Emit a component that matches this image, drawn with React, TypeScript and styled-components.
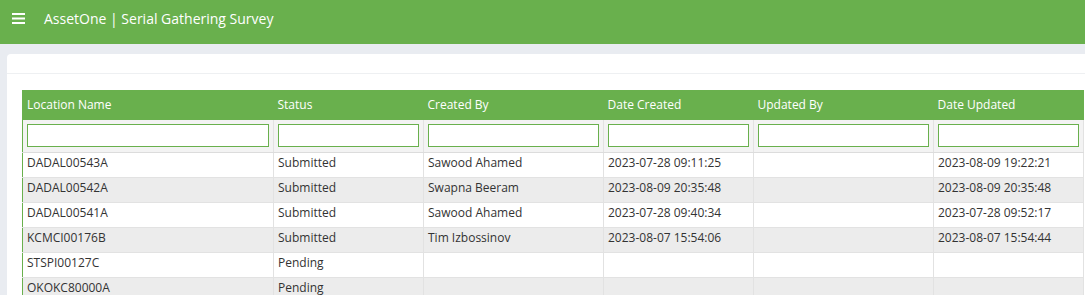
import * as React from "react";
import styled, { createGlobalStyle } from "styled-components";

const GlobalStyle = createGlobalStyle`
  html, body {
    margin: 0;
    padding: 0;
    background: #e9ecf1;
    font-family: "Open Sans", "Liberation Sans", sans-serif;
    overflow: hidden;
  }
`;

type Row = {
  location: string;
  status: string;
  createdBy: string;
  dateCreated: string;
  updatedBy: string;
  dateUpdated: string;
};

const rows: Row[] = [
  { location: "DADAL00543A", status: "Submitted", createdBy: "Sawood Ahamed", dateCreated: "2023-07-28 09:11:25", updatedBy: "", dateUpdated: "2023-08-09 19:22:21" },
  { location: "DADAL00542A", status: "Submitted", createdBy: "Swapna Beeram", dateCreated: "2023-08-09 20:35:48", updatedBy: "", dateUpdated: "2023-08-09 20:35:48" },
  { location: "DADAL00541A", status: "Submitted", createdBy: "Sawood Ahamed", dateCreated: "2023-07-28 09:40:34", updatedBy: "", dateUpdated: "2023-07-28 09:52:17" },
  { location: "KCMCI00176B", status: "Submitted", createdBy: "Tim Izbossinov", dateCreated: "2023-08-07 15:54:06", updatedBy: "", dateUpdated: "2023-08-07 15:54:44" },
  { location: "STSPI00127C", status: "Pending", createdBy: "", dateCreated: "", updatedBy: "", dateUpdated: "" },
  { location: "OKOKC80000A", status: "Pending", createdBy: "", dateCreated: "", updatedBy: "", dateUpdated: "" },
];

const columns = [
  { title: "Location Name", width: 251 },
  { title: "Status", width: 150 },
  { title: "Created By", width: 180 },
  { title: "Date Created", width: 150 },
  { title: "Updated By", width: 180 },
  { title: "Date Updated", width: 150 },
];

const MenuIcon = () => (
  <svg width="13" height="11" viewBox="0 0 13 11">
    <rect x="0" y="0" width="13" height="2" fill="#fff" />
    <rect x="0" y="4.5" width="13" height="2" fill="#fff" />
    <rect x="0" y="9" width="13" height="2" fill="#fff" />
  </svg>
);

export default function App() {
  return (
    <>
      <GlobalStyle />
      <TopBar>
        <MenuButton>
          <MenuIcon />
        </MenuButton>
        <Title>AssetOne | Serial Gathering Survey</Title>
      </TopBar>
      <Content>
        <Card>
          <CardHead />
          <CardBody>
            <Table>
              <colgroup>
                {columns.map((c) => (
                  <col key={c.title} style={{ width: c.width }} />
                ))}
              </colgroup>
              <thead>
                <tr>
                  {columns.map((c) => (
                    <HeadCell key={c.title}>{c.title}</HeadCell>
                  ))}
                </tr>
                <FilterRow>
                  {columns.map((c) => (
                    <FilterCell key={c.title}>
                      <FilterInput type="text" />
                    </FilterCell>
                  ))}
                </FilterRow>
              </thead>
              <tbody>
                {rows.map((r, i) => (
                  <BodyRow key={r.location} $odd={i % 2 === 1}>
                    <Cell>{r.location}</Cell>
                    <Cell>{r.status}</Cell>
                    <Cell>{r.createdBy}</Cell>
                    <Cell>{r.dateCreated}</Cell>
                    <Cell>{r.updatedBy}</Cell>
                    <Cell>{r.dateUpdated}</Cell>
                  </BodyRow>
                ))}
              </tbody>
            </Table>
          </CardBody>
        </Card>
      </Content>
    </>
  );
}

const TopBar = styled.header`
  height: 44px;
  background: #69b04d;
  display: flex;
  align-items: center;
  padding: 0 0 8px 12px;
  box-sizing: border-box;
`;

const MenuButton = styled.div`
  display: flex;
  align-items: center;
  width: 32px;
`;

const Title = styled.div`
  color: #fff;
  font-size: 14px;
`;

const Content = styled.main`
  padding: 10px 0 0 7px;
`;

const Card = styled.section`
  background: #fff;
  border-radius: 4px 0 0 0;
  height: 260px;
`;

const CardHead = styled.div`
  height: 19px;
  border-bottom: 1px solid #eef0f2;
`;

const CardBody = styled.div`
  padding: 16px 0 0 15px;
`;

const Table = styled.table`
  border-collapse: collapse;
  table-layout: fixed;
  width: 1061px;
  border-left: 1px solid #69b04d;
  font-size: 12px;
  color: #333;
`;

const HeadCell = styled.th`
  background: #69b04d;
  color: #fff;
  font-weight: 400;
  text-align: left;
  height: 30px;
  padding: 0 4px 1px;
  box-sizing: border-box;
  vertical-align: middle;
`;

const FilterRow = styled.tr`
  background: #f3f3f3;
`;

const FilterCell = styled.th`
  height: 32px;
  padding: 0 4px;
  border-right: 1px solid #e2e2e2;
  border-bottom: 1px solid #dcdcdc;
  box-sizing: border-box;
`;

const FilterInput = styled.input`
  display: block;
  width: 100%;
  height: 23px;
  box-sizing: border-box;
  border: 1px solid #69b04d;
  background: #fff;
  outline: none;
  padding: 0 4px;
`;

const BodyRow = styled.tr<{ $odd: boolean }>`
  background: ${(p) => (p.$odd ? "#ececec" : "#fff")};
`;

const Cell = styled.td`
  height: 25px;
  padding: 0 4px 4px;
  box-sizing: border-box;
  border-right: 1px solid #e2e2e2;
  border-bottom: 1px solid #e2e2e2;
  white-space: nowrap;
  overflow: hidden;
  vertical-align: middle;
`;
